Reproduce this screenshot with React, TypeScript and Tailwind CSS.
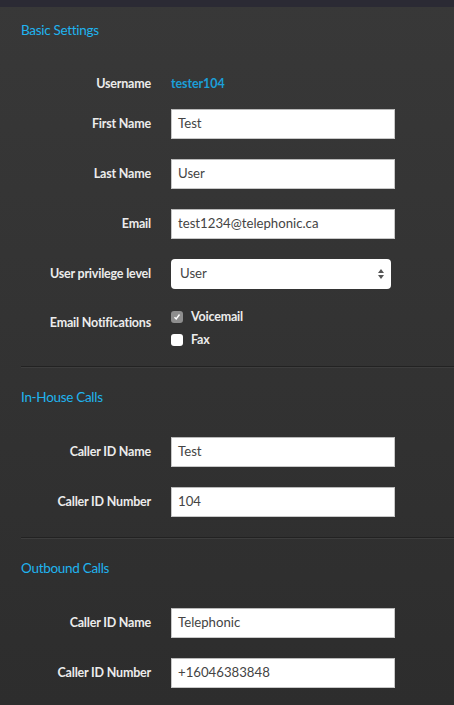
import React from "react";

const font = { fontFamily: "Lato, 'Open Sans', sans-serif" };

function Label({ children, className = "" }: { children: React.ReactNode; className?: string }) {
  return (
    <div className={`w-[151px] shrink-0 text-right text-[12.5px] tracking-[-0.2px] font-bold text-[#ececec] leading-[20px] ${className}`}>
      {children}
    </div>
  );
}

function TextInput({ value }: { value: string }) {
  return (
    <div className="ml-[20px] w-[224px] h-[30px] bg-white border border-[#c8c8c8] border-t-[#b9b9b9] flex items-center pl-[6px] text-[13.2px] text-[#444]">
      {value}
    </div>
  );
}

function InputRow({ label, value, className = "" }: { label: string; value: string; className?: string }) {
  return (
    <div className={`flex items-center h-[30px] ${className}`}>
      <Label>{label}</Label>
      <TextInput value={value} />
    </div>
  );
}

function Heading({ children, className = "" }: { children: React.ReactNode; className?: string }) {
  return (
    <div className={`pl-[21px] h-[20px] leading-[20px] text-[13.5px] tracking-[-0.3px] text-[#20b4ef] ${className}`}>{children}</div>
  );
}

function Divider({ className = "" }: { className?: string }) {
  return (
    <div className={`ml-[21px] ${className}`}>
      <div className="h-px bg-[#222]" />
      <div className="h-px bg-[#3d3d3d]" />
    </div>
  );
}

export default function App() {
  return (
    <div className="w-[454px] h-[705px] overflow-hidden bg-gradient-to-b from-[#383838] to-[#2d2d2d]" style={font}>
      <div className="h-[7px] bg-[#2b2a34]" />
      <Heading className="mt-[13px]">Basic Settings</Heading>
      <div className="flex items-center h-[30px] mt-[29px]">
        <Label>Username</Label>
        <div className="ml-[20px] text-[12.5px] tracking-[-0.1px] font-bold text-[#1b9fd8]">tester104</div>
      </div>
      <InputRow className="mt-[10px]" label="First Name" value="Test" />
      <InputRow className="mt-[20px]" label="Last Name" value="User" />
      <InputRow className="mt-[20px]" label="Email" value="test1234@telephonic.ca" />
      <div className="flex items-center h-[30px] mt-[20px]">
        <Label>User privilege level</Label>
        <div className="ml-[20px] w-[220px] h-[30px] bg-white rounded-[4px] flex items-center justify-between pl-[9px] pr-[6px] text-[13.2px] text-[#444]">
          <span>User</span>
          <svg width="8" height="12" viewBox="0 0 8 12">
            <path d="M4 1 L7 5 L1 5 Z" fill="#555" />
            <path d="M4 11 L7 7 L1 7 Z" fill="#555" />
          </svg>
        </div>
      </div>
      <div className="flex mt-[18px]">
        <Label className="mt-[6px]">Email Notifications</Label>
        <div className="ml-[20px] flex flex-col gap-[3px]">
          <div className="flex items-center h-[20px]">
            <span className="w-[12px] h-[12px] rounded-[3px] bg-[#8e8e8e] flex items-center justify-center">
              <svg width="8" height="8" viewBox="0 0 8 8">
                <path d="M1.5 4.2 L3.2 6 L6.5 1.5" stroke="#fff" strokeWidth="1.4" fill="none" />
              </svg>
            </span>
            <span className="ml-[8px] text-[12.5px] tracking-[-0.2px] font-bold text-[#ececec]">Voicemail</span>
          </div>
          <div className="flex items-center h-[20px]">
            <span className="w-[12px] h-[12px] rounded-[3px] bg-white" />
            <span className="ml-[8px] text-[12.5px] tracking-[-0.2px] font-bold text-[#ececec]">Fax</span>
          </div>
        </div>
      </div>
      <Divider className="mt-[16px]" />
      <Heading className="mt-[19px]">In-House Calls</Heading>
      <InputRow className="mt-[30px]" label="Caller ID Name" value="Test" />
      <InputRow className="mt-[20px]" label="Caller ID Number" value="104" />
      <Divider className="mt-[20px]" />
      <Heading className="mt-[19px]">Outbound Calls</Heading>
      <InputRow className="mt-[30px]" label="Caller ID Name" value="Telephonic" />
      <InputRow className="mt-[20px]" label="Caller ID Number" value="+16046383848" />
    </div>
  );
}
